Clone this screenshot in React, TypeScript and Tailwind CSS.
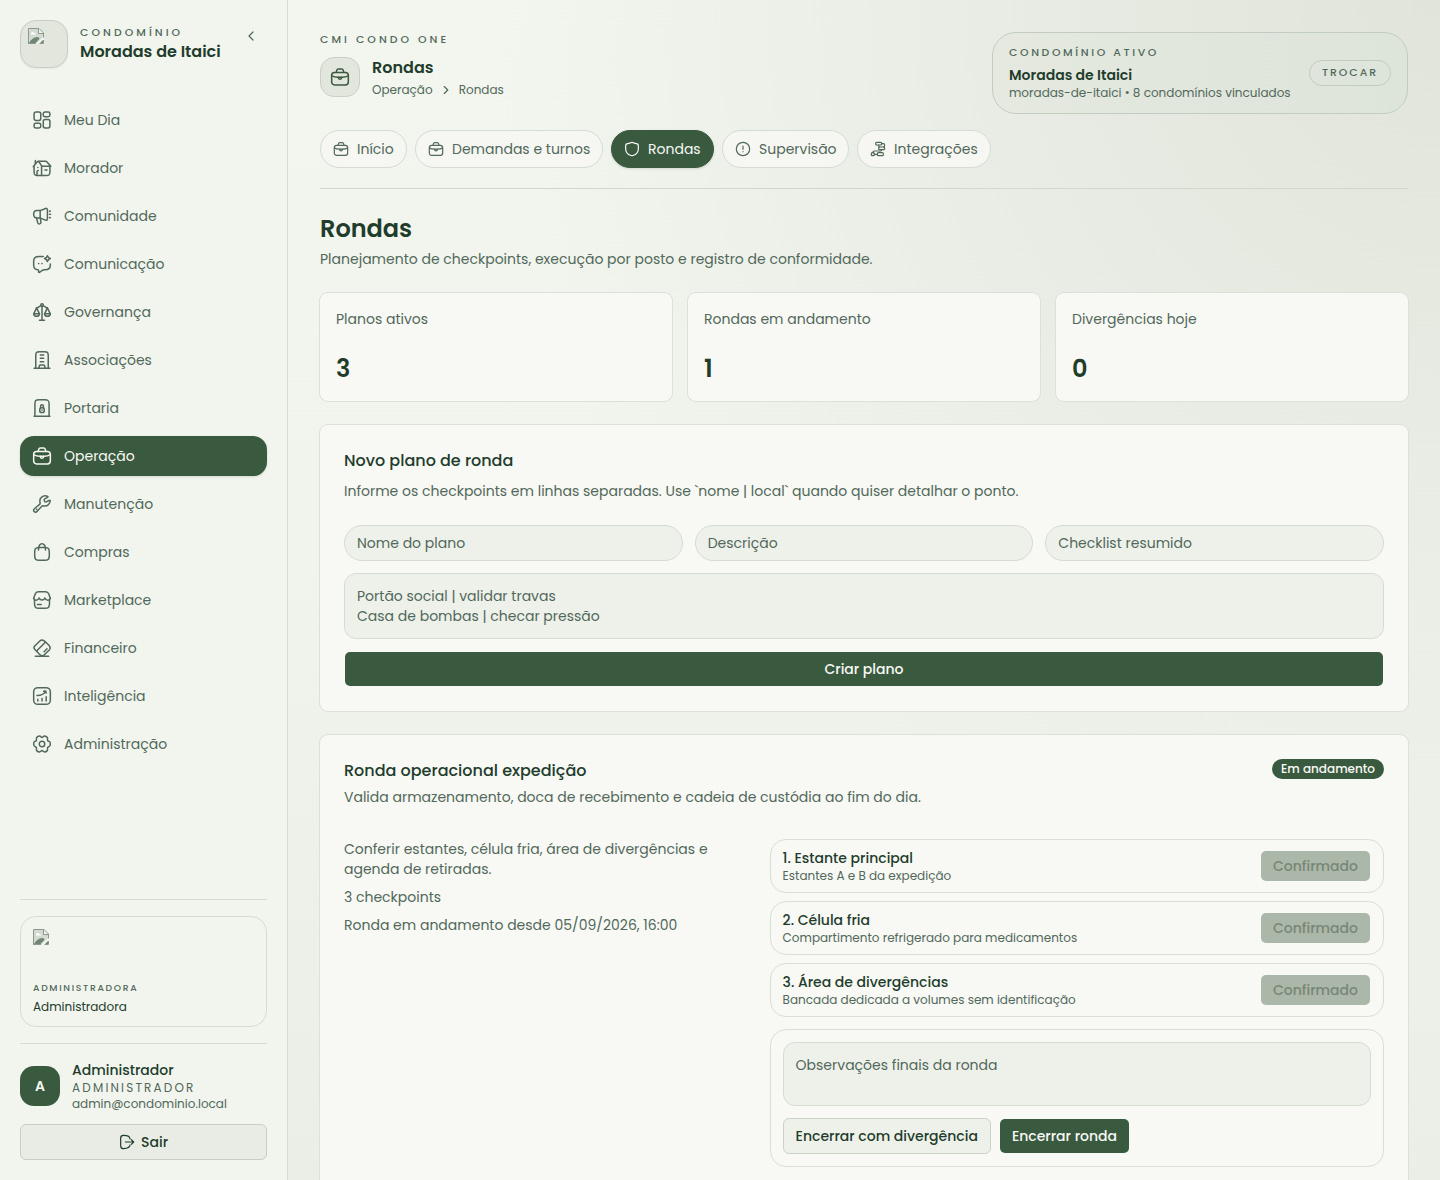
import type { ReactNode } from 'react'

type IconProps = { className?: string; children?: ReactNode }

function Icon({ className = 'size-5', children }: IconProps) {
  return (
    <svg
      viewBox="0 0 24 24"
      fill="none"
      stroke="currentColor"
      strokeWidth="1.8"
      strokeLinecap="round"
      strokeLinejoin="round"
      className={`shrink-0 ${className}`}
    >
      {children}
    </svg>
  )
}

const DashboardIcon = () => (
  <Icon>
    <rect x="2.5" y="2.5" width="8" height="10" rx="2.2" />
    <rect x="13.5" y="2.5" width="8" height="5.6" rx="2" />
    <rect x="2.5" y="15.9" width="8" height="5.6" rx="2" />
    <rect x="13.5" y="11.5" width="8" height="10" rx="2.2" />
  </Icon>
)

const HouseIcon = () => (
  <Icon>
    <path d="M2.500 10.500v6c0 3.500.8 4.500 4 4.500h11c3.200 0 4-1 4-4.500v-6" />
    <path d="M1.500 10.500 5.800 5.200c1-1.200 2-1.200 3 0l2.700 4.300V21" />
    <path d="M4 6.500V3M7.500 4h8.700c1 0 1.500.3 2.100 1l4.200 5H12" />
    <path d="M6 21v-4.500c0-1 .5-1.500 1.500-1.500M7 11.500v.01M15.500 14.500h2.500" />
  </Icon>
)

const MegaphoneIcon = () => (
  <Icon>
    <path d="M10 5.500 16.300 3c1.200-.5 2.200.1 2.200 1.400v11.200c0 1.300-1 1.900-2.200 1.400L10 14.500H5.800C3.500 14.500 2 12.500 2 10s1.500-4.500 3.800-4.500H10Z" />
    <path d="M9.800 5.500v9" />
    <path d="m5.500 14.500 1.300 5.300c.3 1 1 1.700 2 1.700 1.300 0 2.100-1 1.900-2.200L10 14.500" />
    <path d="M21 6.300 22 6M21 10h1.200M21 13.700l1 .3" />
  </Icon>
)

const MessageIcon = () => (
  <Icon>
    <path d="M13.500 3H8.500C4 3 2 4.800 2 8.500v4.800c0 3.700 1.800 5.500 5 5.700.6 0 .9.300.9.900v1.600c0 .6.600.8 1.100.5l3.200-2.200c.8-.5 1.400-.8 2.400-.8h1C20 19 22 17.200 22 13.500V12" />
    <path d="M18.500 2c.5 2 1.200 2.800 3.500 3.500-2.300.7-3 1.500-3.500 3.500-.5-2-1.200-2.800-3.500-3.500 2.300-.7 3-1.500 3.500-3.500Z" />
    <path d="M8 11.500v.01M12 11.500v.01" strokeWidth="2" />
  </Icon>
)

const ScaleIcon = () => (
  <Icon>
    <circle cx="12" cy="3.700" r="1.500" />
    <path d="M12 5.500V22M9 22h6M10.500 4.500c-1.500 0-2 2.500-5 2.500M13.500 4.500c1.500 0 2 2.500 5 2.500" />
    <path d="m5.500 7-3.300 7h6.600l-3.300-7ZM18.500 7l-3.300 7h6.600l-3.300-7Z" />
    <path d="M2 14c.3 4.300 6.700 4.300 7 0M15 14c.3 4.300 6.700 4.300 7 0" />
  </Icon>
)

const BuildingIcon = () => (
  <Icon>
    <path d="M2.500 22h19M4.500 22V7c0-4 .8-5 4.500-5h6c3.700 0 4.500 1 4.500 5v15" />
    <path d="M8.500 22v-2c0-1.500.5-2 2-2h3c1.500 0 2 .5 2 2v2" />
    <path d="M10 6h4M10 10h4M10 14h4" />
  </Icon>
)

const GateIcon = () => (
  <Icon>
    <path d="M2.500 22h19M3.500 22V7c0-4 1-5 5-5h7c4 0 5 1 5 5v15" />
    <rect x="9.300" y="11.800" width="5.400" height="5.700" rx="2.200" />
    <path d="M10.300 12V10c0-2.700 3.400-2.700 3.400 0v2M12 14.500v.3" />
  </Icon>
)

const BriefcaseIcon = ({ className }: { className?: string }) => (
  <Icon className={className}>
    <rect x="2" y="6.500" width="20" height="15" rx="3.500" />
    <path d="M7.500 6.200 8 4.300c.4-1.300.9-1.800 2-1.800h4c1.100 0 1.600.5 2 1.800l.5 1.900" />
    <path d="M2.300 10.500c1.700 1.200 4.200 1.800 7.200 1.800h5c3 0 5.500-.6 7.200-1.800" />
    <path d="M10 12.300v.4c0 2.700 4 2.700 4 0v-.4" />
  </Icon>
)

const WrenchIcon = () => (
  <Icon>
    <path d="M20.400 7.800 17 9.500c-.7.3-1.500 0-1.900-.8l-.5-1.200c-.3-.7 0-1.400.7-1.700L18.700 4c.7-.4.6-1.200-.2-1.400-2.400-.7-5.200-.4-7.200 1.500-2 1.800-2.200 4.200-1.600 6.500.2.800 0 1.400-.6 1.900l-6.200 5.200c-1.200 1.100-1.200 2.400-.3 3.400s2.300 1.100 3.400-.1l5.500-6.100c.5-.6 1.200-.8 2-.6 2.300.4 4.700.1 6.300-1.800 1.800-1.900 2.300-3.300 2-4.600-.2-.6-.7-.6-1.400-.1Z" />
    <path d="M5.500 18.500v.01" strokeWidth="2" />
  </Icon>
)

const BagIcon = () => (
  <Icon>
    <path d="M3.200 13.500c0-5.500.5-7 5.300-7h7c4.800 0 5.300 1.500 5.300 7v2c0 5-1 6.500-5.800 6.500H9c-4.800 0-5.800-1.500-5.800-6.500v-2Z" />
    <path d="M7.800 9.500c0-10 8.400-10 8.400 0" />
  </Icon>
)

const StoreIcon = () => (
  <Icon>
    <path d="M3 11v5c0 4.500 1 6 5.500 6h7c4.500 0 5.500-1.500 5.500-6v-5" />
    <path d="M2 10 4 4.500C4.700 2.500 5.500 2 7.500 2h9c2 0 2.800.5 3.500 2.500l2 5.500" />
    <path d="M2 10c.7 3.200 5.200 3 6.600-.5 1.300 3.300 5.500 3.300 6.800 0 1.400 3.500 5.900 3.700 6.600.5" />
    <path d="M6.500 17.500H11" />
  </Icon>
)

const CardIcon = () => (
  <Icon>
    <path d="M3 10 10 3c2.500-1.500 4-.5 6 1.500l4 4c2 2 2.500 3.500 1 5.500l-6.500 6.500c-2 1.500-3.500 1-5.500-1l-5-5c-2-2-2.300-3-1-4.500Z" />
    <path d="M5.500 15.500 16 5M4 22h16M14.500 16.500l1-1M18 13l-1.500 1.500" />
  </Icon>
)

const ChartIcon = () => (
  <Icon>
    <rect x="2" y="2" width="20" height="20" rx="5" />
    <path d="M7 18v-2M12 18v-3M17 18v-5" />
    <path d="M6 11.500c4.500.2 8-1.500 10.500-5M14 6.300l2.500-.3.500 2.500" />
  </Icon>
)

const GearIcon = () => (
  <Icon>
    <circle cx="12" cy="12" r="3.300" />
    <path d="M22 12Q22 14.800 20.100 15.200 18.200 15.600 18.700 17.700 19.300 19.800 17 21 14.600 22.300 13.300 20.600 12 19 10.700 20.600 9.400 22.300 7 21 4.700 19.800 5.300 17.700 5.800 15.600 3.900 15.200 2 14.800 2 12 2 9.200 3.900 8.800 5.800 8.400 5.300 6.300 4.700 4.200 7 3 9.400 1.700 10.700 3.400 12 5 13.300 3.400 14.600 1.700 17 3 19.300 4.200 18.700 6.300 18.200 8.400 20.100 8.800 22 9.200 22 12Z" />
  </Icon>
)

const ShieldIcon = () => (
  <Icon className="size-4">
    <path d="M12 2c-2.500 1.300-4.500 1.700-6.500 1.800C3.300 3.900 2.500 4.900 2.500 7.200v4.300c0 5.500 4 9 8 10.200.9.300 2.100.3 3 0 4-1.200 8-4.700 8-10.200V7.200c0-2.300-.8-3.300-3-3.400-2-.1-4-.5-6.500-1.800Z" />
  </Icon>
)

const AlertIcon = () => (
  <Icon className="size-4">
    <circle cx="12" cy="12" r="10" />
    <path d="M12 7.500v5M12 16v.01" />
  </Icon>
)

const FlowIcon = () => (
  <Icon className="size-4">
    <rect x="8.500" y="2" width="9" height="4" rx="1.500" />
    <rect x="13" y="9" width="9" height="4" rx="1.500" />
    <rect x="2" y="17.500" width="4.500" height="4.500" rx="1.500" />
    <rect x="11" y="17.500" width="9" height="4.500" rx="1.500" />
    <path d="M17.500 4h2.500c1.500 0 2 1 2 2.500s-.5 2.500-2 2.500M13 6v1.500c0 1 .5 1.500 1.500 1.500M17.500 13c0 1.700-.5 2-2 2H7.500c-2.500 0-3.200.5-3.200 2.500M6.500 20H11" />
  </Icon>
)

const LogoutIcon = () => (
  <Icon className="size-4">
    <path d="M14 3.500C12.500 2.500 10 2 7 2 3.500 2 2.500 3 2.500 6.500v11C2.500 21 3.500 22 7 22c3 0 5.500-.5 7.500-2" />
    <path d="M9.500 12H22M18.500 8.500 22 12l-3.500 3.500" />
    <path d="M14 3.500c1.800 1 2.500 2.200 2.500 4M14.500 20c1.300-1 2-2.200 2-3.500" />
  </Icon>
)

function BrokenImage() {
  return (
    <svg viewBox="0 0 16 16" className="size-4 shrink-0">
      <path d="M0 0h11l5 5v11H0z" fill="#f4f5f1" />
      <path d="M1 1h9.500v4.500H15V9l-6 6H1z" fill="#d3dbd1" />
      <path d="M3 5.500c0-1.500 2.500-2 3-.5 1.300-.3 2 .5 2 1.500H3z" fill="#fff" />
      <path d="M1 15c2-3.500 5-6 8-6 1.500 0 2.500.8 2.500 1.800L7.500 15z" fill="#6f8672" />
      <path d="M12 15h3v-3z" fill="#6f8672" />
      <path d="M.5 16V.5H11L15.500 5v4.500M.5 15.500H8M11.500 15.500h4V12M10.500.5v5h5" fill="none" stroke="#8c998d" />
    </svg>
  )
}

const NAV_ITEMS = [
  { label: 'Meu Dia', icon: <DashboardIcon /> },
  { label: 'Morador', icon: <HouseIcon /> },
  { label: 'Comunidade', icon: <MegaphoneIcon /> },
  { label: 'Comunicação', icon: <MessageIcon /> },
  { label: 'Governança', icon: <ScaleIcon /> },
  { label: 'Associações', icon: <BuildingIcon /> },
  { label: 'Portaria', icon: <GateIcon /> },
  { label: 'Operação', icon: <BriefcaseIcon />, active: true },
  { label: 'Manutenção', icon: <WrenchIcon /> },
  { label: 'Compras', icon: <BagIcon /> },
  { label: 'Marketplace', icon: <StoreIcon /> },
  { label: 'Financeiro', icon: <CardIcon /> },
  { label: 'Inteligência', icon: <ChartIcon /> },
  { label: 'Administração', icon: <GearIcon /> },
]

const TABS = [
  { label: 'Início', icon: <BriefcaseIcon className="size-4" />, width: 'w-[87px]' },
  { label: 'Demandas e turnos', icon: <BriefcaseIcon className="size-4" />, width: 'w-[188px]' },
  { label: 'Rondas', icon: <ShieldIcon />, width: 'w-[103px]', active: true },
  { label: 'Supervisão', icon: <AlertIcon />, width: 'w-[127px]' },
  { label: 'Integrações', icon: <FlowIcon />, width: 'w-[134px]' },
]

const STATS = [
  { label: 'Planos ativos', value: 3 },
  { label: 'Rondas em andamento', value: 1 },
  { label: 'Divergências hoje', value: 0 },
]

const CHECKPOINTS = [
  { title: '1. Estante principal', detail: 'Estantes A e B da expedição' },
  { title: '2. Célula fria', detail: 'Compartimento refrigerado para medicamentos' },
  { title: '3. Área de divergências', detail: 'Bancada dedicada a volumes sem identificação' },
]

function Sidebar() {
  return (
    <aside className="flex w-72 shrink-0 flex-col border-r border-[#d5dbd1] bg-[#f2f5ee] px-5 py-5">
      <div className="flex gap-3">
        <div className="size-12 shrink-0 rounded-2xl border border-[#c6cfc3] bg-[#e2e6dc] p-[7px] shadow-xs">
          <BrokenImage />
        </div>
        <div className="flex-1 pt-[5px] whitespace-nowrap">
          <p className="text-[10.88px] leading-4 font-medium tracking-[0.28em] text-[#51685a]">CONDOMÍNIO</p>
          <p className="text-base leading-[22px] font-semibold text-[#223c2c]">Moradas de Itaici</p>
        </div>
        <div className="mr-2 flex h-8 items-center text-[#51685a]">
          <Icon className="size-4">
            <path d="m15 6-6 6 6 6" />
          </Icon>
        </div>
      </div>

      <nav className="mt-8 flex flex-col gap-2">
        {NAV_ITEMS.map((item) => (
          <a
            key={item.label}
            className={`flex h-10 items-center gap-3 rounded-[14px] px-3 text-sm ${
              item.active ? 'bg-[#3a5a40] text-[#f8f8f4] shadow-sm' : 'text-[#51685a]'
            }`}
          >
            {item.icon}
            {item.label}
          </a>
        ))}
      </nav>

      <div className="mt-auto border-t border-[#d5dcd2] pt-4">
        <div className="h-[111px] rounded-2xl border border-[#d5dcd2] p-3">
          <BrokenImage />
          <p className="mt-[35px] text-[9.28px] leading-4 font-medium tracking-[0.18em] text-[#51685a]">
            ADMINISTRADORA
          </p>
          <p className="mt-[3px] text-xs leading-4 text-[#223c2c]">Administradora</p>
        </div>
      </div>
      <div className="mt-4 border-t border-[#d5dcd2] pt-4">
        <div className="flex items-center gap-3">
          <div className="flex size-10 items-center justify-center rounded-[14px] bg-[#3a5a40] text-sm font-semibold text-[#f8f8f4]">
            A
          </div>
          <div>
            <p className="text-sm leading-5 font-medium text-[#223c2c]">Administrador</p>
            <p className="text-xs leading-4 tracking-[0.18em] text-[#51685a]">ADMINISTRADOR</p>
            <p className="text-xs leading-4 text-[#51685a]">admin@condominio.local</p>
          </div>
        </div>
        <button className="mt-3 flex h-9 w-full items-center justify-center gap-1.5 rounded-md border border-[#c6cfc3] bg-[#e9ece4] text-sm font-medium text-[#223c2c]">
          <LogoutIcon />
          Sair
        </button>
      </div>
    </aside>
  )
}

function Header() {
  return (
    <header className="border-b border-[#d0d8cd] pb-5">
      <div className="flex h-[82px] justify-between">
        <div>
          <p className="text-[10.88px] leading-[15px] font-medium tracking-[0.28em] text-[#51685a]">CMI CONDO ONE</p>
          <div className="mt-2.5 flex gap-3">
            <div className="flex size-10 items-center justify-center rounded-[14px] border border-[#c9d1c6] bg-[#e2e6dc] text-[#3a5a40]">
              <BriefcaseIcon />
            </div>
            <div>
              <p className="text-base leading-[22px] font-semibold text-[#223c2c]">Rondas</p>
              <p className="mt-0.5 flex items-center gap-1.5 text-xs leading-[18px] text-[#51685a]">
                Operação
                <Icon className="size-3.5">
                  <path d="m9 6 6 6-6 6" strokeWidth="2" />
                </Icon>
                Rondas
              </p>
            </div>
          </div>
        </div>

        <div className="flex w-[416px] items-center justify-between rounded-3xl border border-[#c3ccc0] bg-linear-to-r from-[#e5e9e0] to-[#dde4da] px-4">
          <div>
            <p className="text-[10.88px] leading-[15px] font-medium tracking-[0.24em] text-[#51685a]">
              CONDOMÍNIO ATIVO
            </p>
            <p className="mt-[5px] text-sm leading-5 font-semibold text-[#223c2c]">Moradas de Itaici</p>
            <p className="text-xs leading-4 text-[#51685a]">moradas-de-itaici • 8 condomínios vinculados</p>
          </div>
          <span className="flex h-[26px] w-[82px] items-center justify-center rounded-full border border-[#c3ccc0] pb-px text-[10.88px] leading-4 font-medium tracking-[0.18em] text-[#51685a]">
            TROCAR
          </span>
        </div>
      </div>

      <div className="mt-4 flex gap-2">
        {TABS.map((tab) => (
          <a
            key={tab.label}
            className={`flex h-[38px] items-center gap-2 rounded-full border px-3 text-sm whitespace-nowrap ${tab.width} ${
              tab.active
                ? 'border-[#3a5a40] bg-[#3a5a40] text-[#f8f8f4] shadow-sm'
                : 'border-[#d5dcd2] bg-[#f6f7f2] text-[#51685a]'
            }`}
          >
            {tab.icon}
            {tab.label}
          </a>
        ))}
      </div>
    </header>
  )
}

const field = 'border border-[#d5dcd2] bg-[#eef1ea] px-3 text-sm text-[#51685a]'
const card = 'rounded-lg bg-[#f8f8f4] ring-1 ring-[#dbe1d7]'

function NewPlan() {
  return (
    <section className={`mt-6 h-[286px] p-6 ${card}`}>
      <h2 className="text-base leading-6 font-medium text-[#223c2c]">Novo plano de ronda</h2>
      <p className="mt-2 text-sm leading-5 text-[#51685a]">
        Informe os checkpoints em linhas separadas. Use `nome | local` quando quiser detalhar o ponto.
      </p>
      <div className="mt-6 grid grid-cols-3 gap-3">
        <div className={`flex h-9 items-center rounded-[18px] ${field}`}>Nome do plano</div>
        <div className={`flex h-9 items-center rounded-[18px] ${field}`}>Descrição</div>
        <div className={`flex h-9 items-center rounded-[18px] ${field}`}>Checklist resumido</div>
      </div>
      <div className={`mt-3 h-[66px] rounded-xl py-3 leading-5 ${field}`}>
        <p>Portão social | validar travas</p>
        <p>Casa de bombas | checar pressão</p>
      </div>
      <button className="mt-3 h-9 w-full rounded-md border border-transparent bg-[#3a5a40] bg-clip-padding text-sm font-medium text-[#f8f8f4]">
        Criar plano
      </button>
    </section>
  )
}

function RoundCard() {
  return (
    <section className={`mt-6 h-[480px] p-6 ${card}`}>
      <div className="flex items-start justify-between">
        <div>
          <h2 className="text-base leading-6 font-medium text-[#223c2c]">Ronda operacional expedição</h2>
          <p className="mt-1 text-sm leading-5 text-[#51685a]">
            Valida armazenamento, doca de recebimento e cadeia de custódia ao fim do dia.
          </p>
        </div>
        <span className="flex h-5 w-28 items-center justify-center rounded-full bg-[#3a5a40] text-xs font-medium text-[#f8f8f4]">
          Em andamento
        </span>
      </div>

      <div className="mt-8 grid grid-cols-[2fr_3fr] gap-4">
        <div className="space-y-2 text-sm leading-5 text-[#51685a]">
          <p>Conferir estantes, célula fria, área de divergências e agenda de retiradas.</p>
          <p>3 checkpoints</p>
          <p>Ronda em andamento desde 05/09/2026, 16:00</p>
        </div>
        <div>
          <div className="space-y-2">
            {CHECKPOINTS.map((checkpoint) => (
              <div
                key={checkpoint.title}
                className="flex h-[54px] items-center justify-between rounded-2xl border border-[#d9dfd5] px-3"
              >
                <div>
                  <p className="text-sm leading-5 font-medium text-[#223c2c]">{checkpoint.title}</p>
                  <p className="text-xs leading-4 text-[#51685a]">{checkpoint.detail}</p>
                </div>
                <button className="h-8 rounded-md border border-transparent bg-[#abb7a8] bg-clip-padding px-3 text-sm font-medium text-[#788677]">
                  Confirmado
                </button>
              </div>
            ))}
          </div>
          <div className="mt-3 h-[138px] rounded-2xl border border-[#d9dfd5] p-3">
            <div className={`h-16 rounded-xl py-3 leading-5 ${field}`}>Observações finais da ronda</div>
            <div className="mt-3 flex gap-2">
              <button className="h-9 rounded-md border border-[#cbd3c8] bg-[#eef1ea] px-3 text-sm font-medium text-[#223c2c]">
                Encerrar com divergência
              </button>
              <button className="h-9 rounded-md border border-transparent bg-[#3a5a40] bg-clip-padding px-3 text-sm font-medium text-[#f8f8f4]">
                Encerrar ronda
              </button>
            </div>
          </div>
        </div>
      </div>
    </section>
  )
}

export default function App() {
  return (
    <div className="flex h-[1180px] w-[1440px] overflow-hidden bg-[#eef1ea] font-[Poppins,Inter,sans-serif]">
      <Sidebar />
      <main className="min-w-0 flex-1 bg-[radial-gradient(ellipse_at_top_right,#e0e4da_0%,#e9ece4_28%,transparent_58%),linear-gradient(180deg,#f3f6ef_0%,#f1f4ed_45%,#ebeee7_100%)] px-8 pt-8">
        <Header />
        <h1 className="mt-6 text-2xl leading-8 font-semibold text-[#223c2c]">Rondas</h1>
        <p className="mt-1 text-sm leading-5 text-[#51685a]">
          Planejamento de checkpoints, execução por posto e registro de conformidade.
        </p>
        <div className="mt-6 grid grid-cols-3 gap-4">
          {STATS.map((stat) => (
            <div key={stat.label} className={`h-[108px] px-4 pt-4 ${card}`}>
              <p className="text-sm leading-5 text-[#51685a]">{stat.label}</p>
              <p className="mt-6 text-2xl leading-8 font-semibold text-[#223c2c]">{stat.value}</p>
            </div>
          ))}
        </div>
        <NewPlan />
        <RoundCard />
      </main>
    </div>
  )
}
